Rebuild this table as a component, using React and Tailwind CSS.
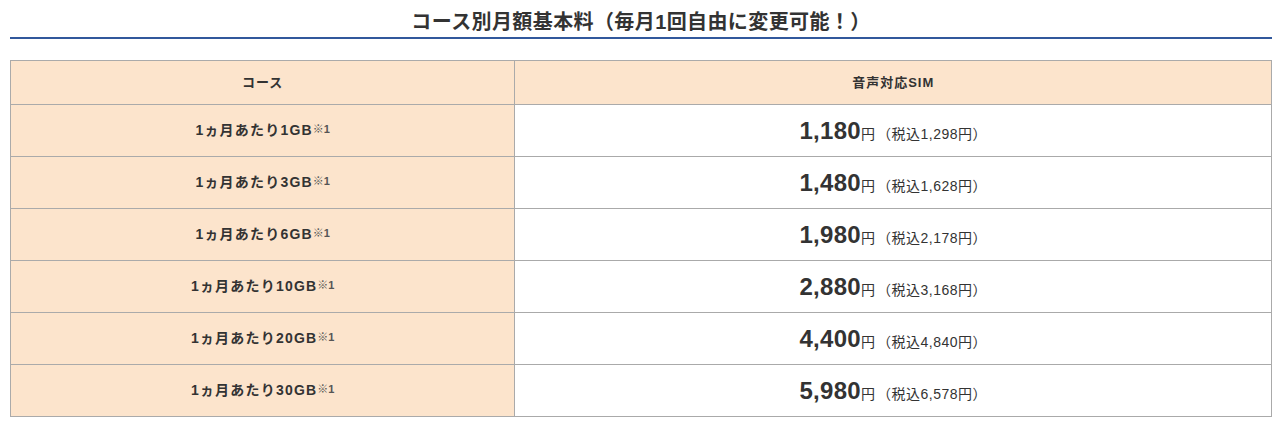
const rows = [
  { gb: '1GB', price: '1,180', tax: '1,298' },
  { gb: '3GB', price: '1,480', tax: '1,628' },
  { gb: '6GB', price: '1,980', tax: '2,178' },
  { gb: '10GB', price: '2,880', tax: '3,168' },
  { gb: '20GB', price: '4,400', tax: '4,840' },
  { gb: '30GB', price: '5,980', tax: '6,578' },
]

export default function App() {
  return (
    <div
      className="bg-white pl-[10px] pr-[8px] text-[#333]"
      style={{ fontFamily: '"Liberation Sans", "Noto Sans CJK JP", sans-serif' }}
    >
      <h2 className="text-[20px] font-bold text-center leading-[24px] tracking-[0.4px] pt-[10px] pb-[3px] border-b-2 border-[#31589c]">
        コース別月額基本料（毎月1回自由に変更可能！）
      </h2>

      <table className="w-full mt-[21px] border-collapse border-[1.5px] border-[#aaa]">
        <thead>
          <tr className="h-[44px] bg-[#fce4cc]">
            <th className="w-[40%] border-[1.5px] border-[#aaa] text-[13px] font-bold tracking-[1px]">コース</th>
            <th className="border-[1.5px] border-[#aaa] text-[13px] font-bold tracking-[1px]">音声対応SIM</th>
          </tr>
        </thead>
        <tbody>
          {rows.map((r) => (
            <tr key={r.gb} className="h-[52px]">
              <td className="bg-[#fce4cc] border-[1.5px] border-[#aaa] text-center text-[14px] font-bold tracking-[1.2px]">
                1ヵ月あたり{r.gb}
                <sup className="text-[11px] font-bold text-[#555] tracking-normal relative -top-[2px]">※1</sup>
              </td>
              <td className="bg-white border-[1.5px] border-[#aaa] text-center">
                <span className="text-[24px] font-bold tracking-[0.3px]">{r.price}</span>
                <span className="text-[14px]">円</span>
                <span className="text-[14px] tracking-[0.5px] ml-[2px]">（税込{r.tax}円）</span>
              </td>
            </tr>
          ))}
        </tbody>
      </table>
    </div>
  )
}
